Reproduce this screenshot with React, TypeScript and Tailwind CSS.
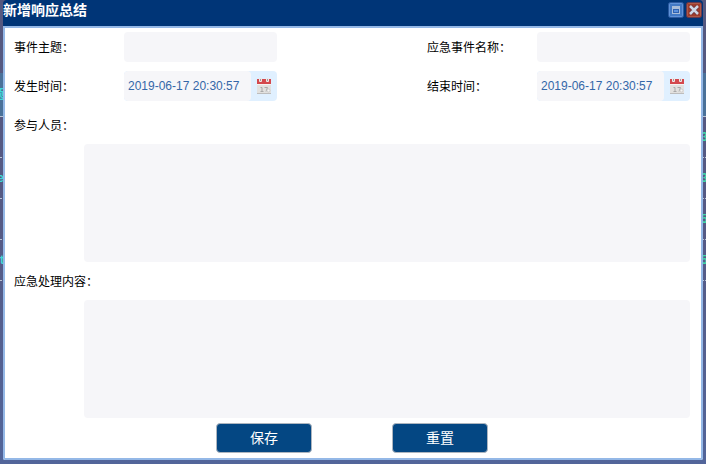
import { useState } from "react";

const BACKGROUND_ROWS = [
  { left: "题", right: "", className: "h-11 border-solid bg-[#4a7199]" },
  { left: "", right: "3", className: "h-[41px] border-dotted" },
  { left: "e", right: "3", className: "h-[41px] border-dotted" },
  { left: "", right: "5", className: "h-[41px] border-dotted" },
  { left: "t", right: "5", className: "h-[41px] border-dotted" },
];

function CalendarIcon() {
  return (
    <svg width="16" height="18" viewBox="0 0 16 18" aria-hidden="true">
      <rect x="1" y="3" width="14" height="14" fill="#e2e1df" />
      <rect x="1" y="16" width="14" height="1" fill="#bdbdbd" />
      <rect x="1" y="2" width="14" height="5" fill="#d4494d" />
      <rect x="1" y="7" width="14" height="1" fill="#f5f3f2" />
      <rect x="3" y="1" width="3" height="4" rx="1" fill="#efe9e9" />
      <rect x="10" y="1" width="3" height="4" rx="1" fill="#efe9e9" />
      <rect x="4" y="2" width="1" height="2" fill="#a99a9a" />
      <rect x="11" y="2" width="1" height="2" fill="#a99a9a" />
      <path
        d="M4.5 10.5h1.5v4M4.5 14.5h3M8.5 10.5h3l-1.5 4"
        fill="none"
        stroke="#a9a9a9"
      />
      <circle cx="12.5" cy="13.5" r="1.5" fill="#f6f6f6" stroke="#cccccc" />
    </svg>
  );
}

function TextField({ id, label }: { id: string; label: string }) {
  return (
    <div className="flex items-center">
      <label htmlFor={id} className="w-[110px] pt-px">
        {label}
      </label>
      <input
        id={id}
        type="text"
        className="h-[30px] w-[153px] rounded-[4px] bg-[#f6f6f9] px-1 text-[#3467a8] outline-none"
      />
    </div>
  );
}

function DateField({ id, label }: { id: string; label: string }) {
  const [value, setValue] = useState("2019-06-17 20:30:57");

  return (
    <div className="flex items-center">
      <label htmlFor={id} className="w-[110px] pt-px">
        {label}
      </label>
      <div className="flex h-[30px] w-[153px] overflow-hidden rounded-[4px] bg-[#e0f0ff]">
        <input
          id={id}
          type="text"
          value={value}
          onChange={(e) => setValue(e.target.value)}
          className="min-w-0 flex-1 rounded-[4px] bg-[#f6f6f9] px-1 text-[#3467a8] outline-none"
        />
        <button
          type="button"
          aria-label="选择日期"
          className="flex w-[26px] items-center justify-center"
        >
          <CalendarIcon />
        </button>
      </div>
    </div>
  );
}

function AreaField({ id, label }: { id: string; label: string }) {
  return (
    <div className="flex flex-col gap-1">
      <label htmlFor={id} className="h-[30px] leading-8">
        {label}
      </label>
      <textarea
        id={id}
        className="ml-[70px] h-[118px] resize-none rounded-[4px] bg-[#f6f6f9] p-1 text-[#3467a8] outline-none"
      />
    </div>
  );
}

function WindowButtons() {
  return (
    <div className="flex gap-[2px]">
      <button type="button" aria-label="最大化">
        <svg width="16" height="16" viewBox="0 0 16 16">
          <rect x="0.5" y="0.5" width="15" height="15" rx="2" fill="#4777bb" stroke="#2b599f" />
          <rect x="1.5" y="1.5" width="13" height="13" rx="1" fill="#4279c4" stroke="#5f92d8" />
          <rect x="4" y="4" width="8" height="8" fill="#a9bdd8" />
          <rect x="5" y="7" width="6" height="4" fill="#2f62b0" />
          <rect x="6" y="8" width="4" height="2" fill="#5b91dd" />
        </svg>
      </button>
      <button type="button" aria-label="关闭">
        <svg width="16" height="16" viewBox="0 0 16 16">
          <rect x="0.5" y="0.5" width="15" height="15" rx="2" fill="#9b4032" stroke="#67384c" />
          <rect x="1.5" y="1.5" width="13" height="13" rx="1" fill="#9e3c2c" stroke="#ad5947" />
          <path d="M4.5 4.5l7 7M11.5 4.5l-7 7" stroke="#6c3038" strokeWidth="4" />
          <path d="M4 4l8 8M12 4l-8 8" stroke="#ccd6e5" strokeWidth="2.5" />
        </svg>
      </button>
    </div>
  );
}

export default function App() {
  return (
    <div className="relative min-h-screen overflow-hidden bg-linear-to-b from-[#55587f] via-[#555a85] to-[#52659a] pb-1 font-['Liberation_Sans','Noto_Sans_CJK_SC',sans-serif] text-xs text-black">
      {/* List page behind the window */}
      <div
        aria-hidden="true"
        className="absolute inset-x-0 top-[73px] leading-4 font-bold"
      >
        {BACKGROUND_ROWS.map((row, i) => (
          <div
            key={i}
            className={`flex items-center justify-between border-b border-[#b9c3d3] ${row.className}`}
          >
            <span className="flex w-1 justify-end text-[#3fd8d8]">
              {row.left}
            </span>
            <span className="w-[5px] text-[#3fd8a8]">{row.right}</span>
          </div>
        ))}
      </div>

      <div
        role="dialog"
        aria-labelledby="dialog-title"
        className="relative mx-[3px] overflow-hidden rounded-t-[4px] rounded-b-[2px] bg-[#003577]"
      >
        <div className="flex h-[26px] items-center justify-between pr-px pb-[6px]">
          <h1 id="dialog-title" className="text-sm font-bold text-white">
            新增响应总结
          </h1>
          <WindowButtons />
        </div>

        <form
          className="flex flex-col gap-[9px] border-2 border-[#94b8e7] bg-white pt-1 pr-[11px] pb-[5px] pl-[9px]"
          onSubmit={(e) => e.preventDefault()}
        >
          <div className="flex justify-between">
            <TextField id="subject" label="事件主题：" />
            <TextField id="event-name" label="应急事件名称：" />
          </div>
          <div className="flex justify-between">
            <DateField id="start-time" label="发生时间：" />
            <DateField id="end-time" label="结束时间：" />
          </div>

          <div className="flex flex-col gap-1">
            <AreaField id="members" label="参与人员：" />
            <AreaField id="content" label="应急处理内容：" />

            <div className="flex justify-center gap-20 pt-px">
              <button
                type="submit"
                className="h-[30px] w-24 rounded-[4px] border border-[#adb5bf] bg-[#044783] text-sm text-white"
              >
                保存
              </button>
              <button
                type="reset"
                className="h-[30px] w-24 rounded-[4px] border border-[#adb5bf] bg-[#044783] text-sm text-white"
              >
                重置
              </button>
            </div>
          </div>
        </form>
      </div>
    </div>
  );
}
